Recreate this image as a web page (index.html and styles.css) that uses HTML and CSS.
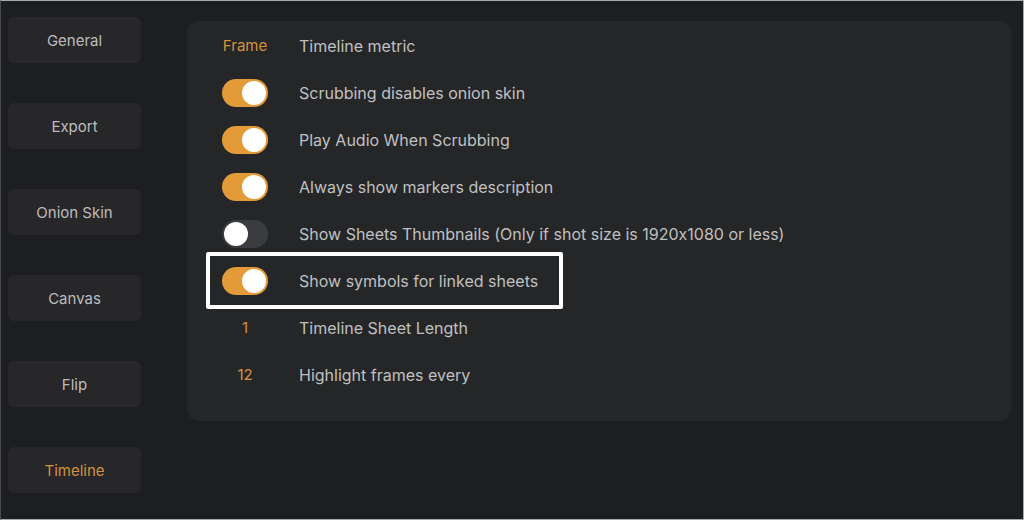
FILE: index.html
```html
<!DOCTYPE html>
<html lang="en">
<head>
  <meta charset="UTF-8" />
  <meta name="viewport" content="width=device-width, initial-scale=1.0"/>
  <title>Preferences - Timeline</title>
  <link rel="stylesheet" href="styles.css">
</head>
<body>
  <div class="frame">
    <nav class="sidebar">
      <div class="tab">General</div>
      <div class="tab">Export</div>
      <div class="tab">Onion Skin</div>
      <div class="tab">Canvas</div>
      <div class="tab">Flip</div>
      <div class="tab active">Timeline</div>
    </nav>

    <section class="panel">
      <div class="row">
        <div class="lead value">Frame</div>
        <div class="label">Timeline metric</div>
      </div>
      <div class="row">
        <div class="lead"><span class="switch on"></span></div>
        <div class="label">Scrubbing disables onion skin</div>
      </div>
      <div class="row">
        <div class="lead"><span class="switch on"></span></div>
        <div class="label">Play Audio When Scrubbing</div>
      </div>
      <div class="row">
        <div class="lead"><span class="switch on"></span></div>
        <div class="label">Always show markers description</div>
      </div>
      <div class="row">
        <div class="lead"><span class="switch"></span></div>
        <div class="label">Show Sheets Thumbnails (Only if shot size is 1920x1080 or less)</div>
      </div>
      <div class="row">
        <div class="lead"><span class="switch on"></span></div>
        <div class="label">Show symbols for linked sheets</div>
      </div>
      <div class="row">
        <div class="lead value">1</div>
        <div class="label">Timeline Sheet Length</div>
      </div>
      <div class="row">
        <div class="lead value">12</div>
        <div class="label">Highlight frames every</div>
      </div>

      <!-- callout around the linked sheets option -->
      <div class="highlight"></div>
    </section>
  </div>
</body>
</html>
```

FILE: styles.css
```css
* {
  box-sizing: border-box;
}
body {
  margin: 0;
  background: #1c1e1f;
  font-family: Inter, "Noto Sans", sans-serif;
  font-feature-settings: "calt" 0;
  color: #bcbcbc;
}
.frame {
  width: 1024px;
  height: 520px;
  display: flex;
  background: #1c1e1f;
  border: 1px solid #a9a9a9;
  border-left-color: #4a4b4c;
  padding: 16px 0 0 7px;
}
.sidebar {
  width: 133px;
  display: flex;
  flex-direction: column;
  gap: 40px;
}
.tab {
  height: 46px;
  background: #272629;
  border-radius: 6px;
  display: flex;
  align-items: center;
  justify-content: center;
  font-size: 15px;
  color: #bdbdbd;
}
.tab.active {
  color: #d4923a;
}
.panel {
  position: relative;
  width: 824px;
  height: 400px;
  margin: 4px 0 0 46px;
  background: #242628;
  border-radius: 12px;
  padding: 1px 0 0 35px;
}
.row {
  height: 47px;
  display: flex;
  align-items: center;
}
.lead {
  width: 46px;
  display: flex;
  justify-content: center;
  align-items: center;
  margin-right: 31px;
}
.value {
  color: #d4923a;
  font-size: 15px;
}
.label {
  font-size: 16px;
  color: #c0c0c0;
  white-space: nowrap;
}
.switch {
  position: relative;
  width: 46px;
  height: 28px;
  border-radius: 14px;
  background: #3b3c3f;
}
.switch::after {
  content: "";
  position: absolute;
  top: 2px;
  left: 2px;
  width: 24px;
  height: 24px;
  border-radius: 50%;
  background: #fff;
}
.switch.on {
  background: #e29b38;
}
.switch.on::after {
  left: 20px;
}
.highlight {
  position: absolute;
  left: 19px;
  top: 231px;
  width: 357px;
  height: 57px;
  border: 4px solid #fff;
  border-radius: 2px;
}
```
